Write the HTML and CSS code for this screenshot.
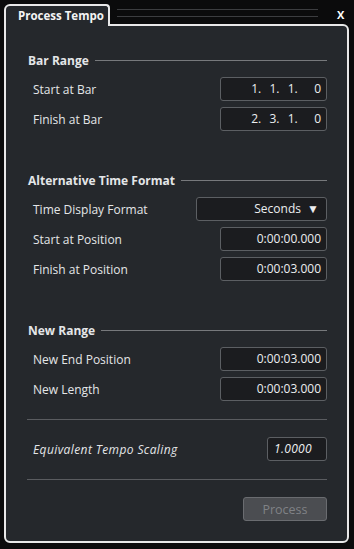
FILE: index.html
```html
<html>
<head>
<title>Process Tempo</title>
<link rel="stylesheet" href="styles.css">
</head>
<body>
<div class="window">
  <div class="titlebar">
    <div class="tab">Process Tempo</div>
    <div class="grip"><span></span><span></span></div>
    <div class="close">X</div>
  </div>
  <div class="panel">
    <div class="section first">
      <div class="heading">Bar Range</div>
      <div class="row"><span class="label">Start at Bar</span><span class="field bars">1.&nbsp; 1.&nbsp; 1.&nbsp;&nbsp;&nbsp; 0</span></div>
      <div class="row"><span class="label">Finish at Bar</span><span class="field bars">2.&nbsp; 3.&nbsp; 1.&nbsp;&nbsp;&nbsp; 0</span></div>
    </div>
    <div class="section">
      <div class="heading">Alternative Time Format</div>
      <div class="row"><span class="label">Time Display Format</span><span class="field select">Seconds <span class="arrow">&#9660;</span></span></div>
      <div class="row"><span class="label">Start at Position</span><span class="field">0:00:00.000</span></div>
      <div class="row"><span class="label">Finish at Position</span><span class="field">0:00:03.000</span></div>
    </div>
    <div class="section">
      <div class="heading">New Range</div>
      <div class="row"><span class="label">New End Position</span><span class="field">0:00:03.000</span></div>
      <div class="row"><span class="label">New Length</span><span class="field">0:00:03.000</span></div>
    </div>
    <div class="separator"></div>
    <div class="row tempo"><span class="label">Equivalent Tempo Scaling</span><span class="field small">1.0000</span></div>
    <div class="separator"></div>
    <div class="actions"><button type="button" class="process">Process</button></div>
  </div>
</div>
</body>
</html>
```

FILE: styles.css
```css
body { margin: 0; background-color: #0b0b0c; font-family: "Open Sans", "Noto Sans", sans-serif; font-size: 12px; color: #e4e6e8; }

.window { padding: 4px 5px 5px 4px; }

.titlebar { display: flex; align-items: flex-start; height: 20px; }
.tab { width: 90px; padding-left: 12px;
       border: 2px solid #e8e8e8; border-bottom: none;
       border-radius: 6px 4px 0 0;
       background-color: #25282c;
       font-weight: bold; font-size: 11.5px; line-height: 19px; color: #f4f4f4;
       position: relative; z-index: 1; margin-bottom: -2px; height: 20px; }
.grip { flex: 1; display: flex; flex-direction: column; gap: 6px; padding: 5px 19px 0 7px; }
.grip span { display: block; height: 1px; background-color: #3c3d40; }
.close { width: 12px; font-weight: bold; font-size: 11px; line-height: 22px; color: #ffffff; }

.panel { border: 2px solid #e8e8e8; border-radius: 0 6px 6px 6px;
         background-color: #25282c; padding: 26px 20px 20px 21px; }

.section { margin-top: 41px; }
.section.first { margin-top: 0; }

.heading { display: flex; align-items: center; height: 16px; margin-bottom: 9px;
           font-weight: bold; font-size: 12px; color: #e4e6e8; padding-left: 1px; }
.heading::after { content: ""; flex: 1; height: 1px; background-color: #77797c; margin-left: 6px; }

.row { display: flex; align-items: center; justify-content: space-between; height: 24px; margin-bottom: 6px; padding-left: 6px; }
.section .row:last-child { margin-bottom: 0; }
.label { color: #e4e6e8; }

.field { box-sizing: border-box; width: 107px; height: 24px; padding: 0 5px;
         border: 1px solid #5c5f63; border-radius: 3px; background-color: #1b1c1f;
         text-align: right; line-height: 22px; color: #eceef0; }
.field.select { width: 131px; padding-right: 7px; }
.field.small { width: 60px; font-style: italic; letter-spacing: 0.3px; text-align: left; padding-left: 6px; }
.arrow { font-size: 12px; margin-left: 3px; }
.bars { word-spacing: 1px; }

.separator { height: 1px; background-color: #5a5c60; margin: 18px 0 17px 0; }
.tempo { margin-bottom: 0; }
.tempo .label { font-style: italic; letter-spacing: 0.4px; }

.actions { display: flex; justify-content: flex-end; }
.process { width: 84px; height: 24px; border: 1px solid #6a6c70; border-radius: 3px;
           background-color: #4b4d51; color: #808286;
           font-family: "Open Sans", "Noto Sans", sans-serif; font-size: 12.5px; }
```
